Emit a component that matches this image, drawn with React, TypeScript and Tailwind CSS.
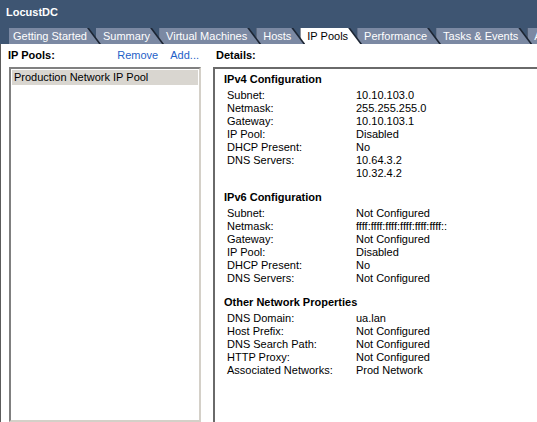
const tabs = [
  { label: "Getting Started", z: "z-[9]", first: true },
  { label: "Summary", z: "z-[8]" },
  { label: "Virtual Machines", z: "z-[7]" },
  { label: "Hosts", z: "z-[6]" },
  { label: "IP Pools", z: "z-[5]", active: true },
  { label: "Performance", z: "z-[4]" },
  { label: "Tasks & Events", z: "z-[3]" },
  { label: "Alarms", z: "z-[2]" },
];

const sections = [
  {
    title: "IPv4 Configuration",
    rows: [
      ["Subnet:", "10.10.103.0"],
      ["Netmask:", "255.255.255.0"],
      ["Gateway:", "10.10.103.1"],
      ["IP Pool:", "Disabled"],
      ["DHCP Present:", "No"],
      ["DNS Servers:", "10.64.3.2"],
      ["", "10.32.4.2"],
    ],
  },
  {
    title: "IPv6 Configuration",
    rows: [
      ["Subnet:", "Not Configured"],
      ["Netmask:", "ffff:ffff:ffff:ffff:ffff:ffff::"],
      ["Gateway:", "Not Configured"],
      ["IP Pool:", "Disabled"],
      ["DHCP Present:", "No"],
      ["DNS Servers:", "Not Configured"],
    ],
  },
  {
    title: "Other Network Properties",
    rows: [
      ["DNS Domain:", "ua.lan"],
      ["Host Prefix:", "Not Configured"],
      ["DNS Search Path:", "Not Configured"],
      ["HTTP Proxy:", "Not Configured"],
      ["Associated Networks:", "Prod Network"],
    ],
  },
];

function Tab({ label, z, first, active }: { label: string; z: string; first?: boolean; active?: boolean }) {
  return (
    <div
      className={`relative ${z} ${first ? "" : "-ml-[5px]"} shrink-0 h-[16px] pr-[2px] bg-[#1c2533] [clip-path:polygon(0_0,calc(100%-12px)_0,100%_100%,0_100%)]`}
    >
      <div
        className={`h-full flex items-center ${first ? "pl-[4px]" : "pl-[7px]"} pr-[12px] whitespace-nowrap [clip-path:polygon(0_0,calc(100%-12px)_0,100%_100%,0_100%)] ${
          active ? "bg-white text-black" : "bg-[#7b89a3] text-white"
        }`}
      >
        {label}
      </div>
    </div>
  );
}

export default function App() {
  return (
    <div className="w-[537px] h-[422px] overflow-hidden bg-white text-[11px] leading-[13px] text-black font-['Liberation_Sans',Arial,sans-serif]">
      <div className="h-[44px] bg-[#3e5572] flex flex-col">
        <div className="h-[28px] flex items-center pl-[6px] pb-[4px] font-bold text-white">LocustDC</div>
        <div className="h-[16px] flex pl-[9px] overflow-hidden">
          {tabs.map((t) => (
            <Tab key={t.label} {...t} />
          ))}
        </div>
      </div>

      <div className="h-[378px] flex border-l border-[#5c5c5c]">
        <div className="w-[212px] flex flex-col">
          <div className="h-[23px] flex items-center pl-[7px] pr-[14px]">
            <span className="font-bold">IP Pools:</span>
            <span className="ml-auto text-[#1f5fc8]">Remove</span>
            <span className="ml-[12px] text-[#1f5fc8]">Add...</span>
          </div>
          <div className="flex-1 ml-[8px] w-[192px] border-2 border-t-[#808080] border-l-[#808080] border-r-[#d4d0c8] border-b-[#d4d0c8] p-[1px]">
            <div className="h-[15px] flex items-center pl-[2px] bg-[#d9d6d0]">Production Network IP Pool</div>
          </div>
        </div>

        <div className="flex-1 flex flex-col">
          <div className="h-[23px] flex items-center pl-[3px] font-bold">Details:</div>
          <div className="flex-1 border-l-2 border-t-2 border-l-[#6a6a6a] border-t-[#6a6a6a] pl-[9px] pt-[4px]">
            {sections.map((s, i) => (
              <div key={s.title} className={i > 0 ? "mt-[11px]" : ""}>
                <div className="font-bold mb-[3px]">{s.title}</div>
                {s.rows.map(([k, v], j) => (
                  <div key={j} className="flex pl-[3px]">
                    <span className="w-[129px] shrink-0">{k}</span>
                    <span>{v}</span>
                  </div>
                ))}
              </div>
            ))}
          </div>
        </div>
      </div>
    </div>
  );
}
